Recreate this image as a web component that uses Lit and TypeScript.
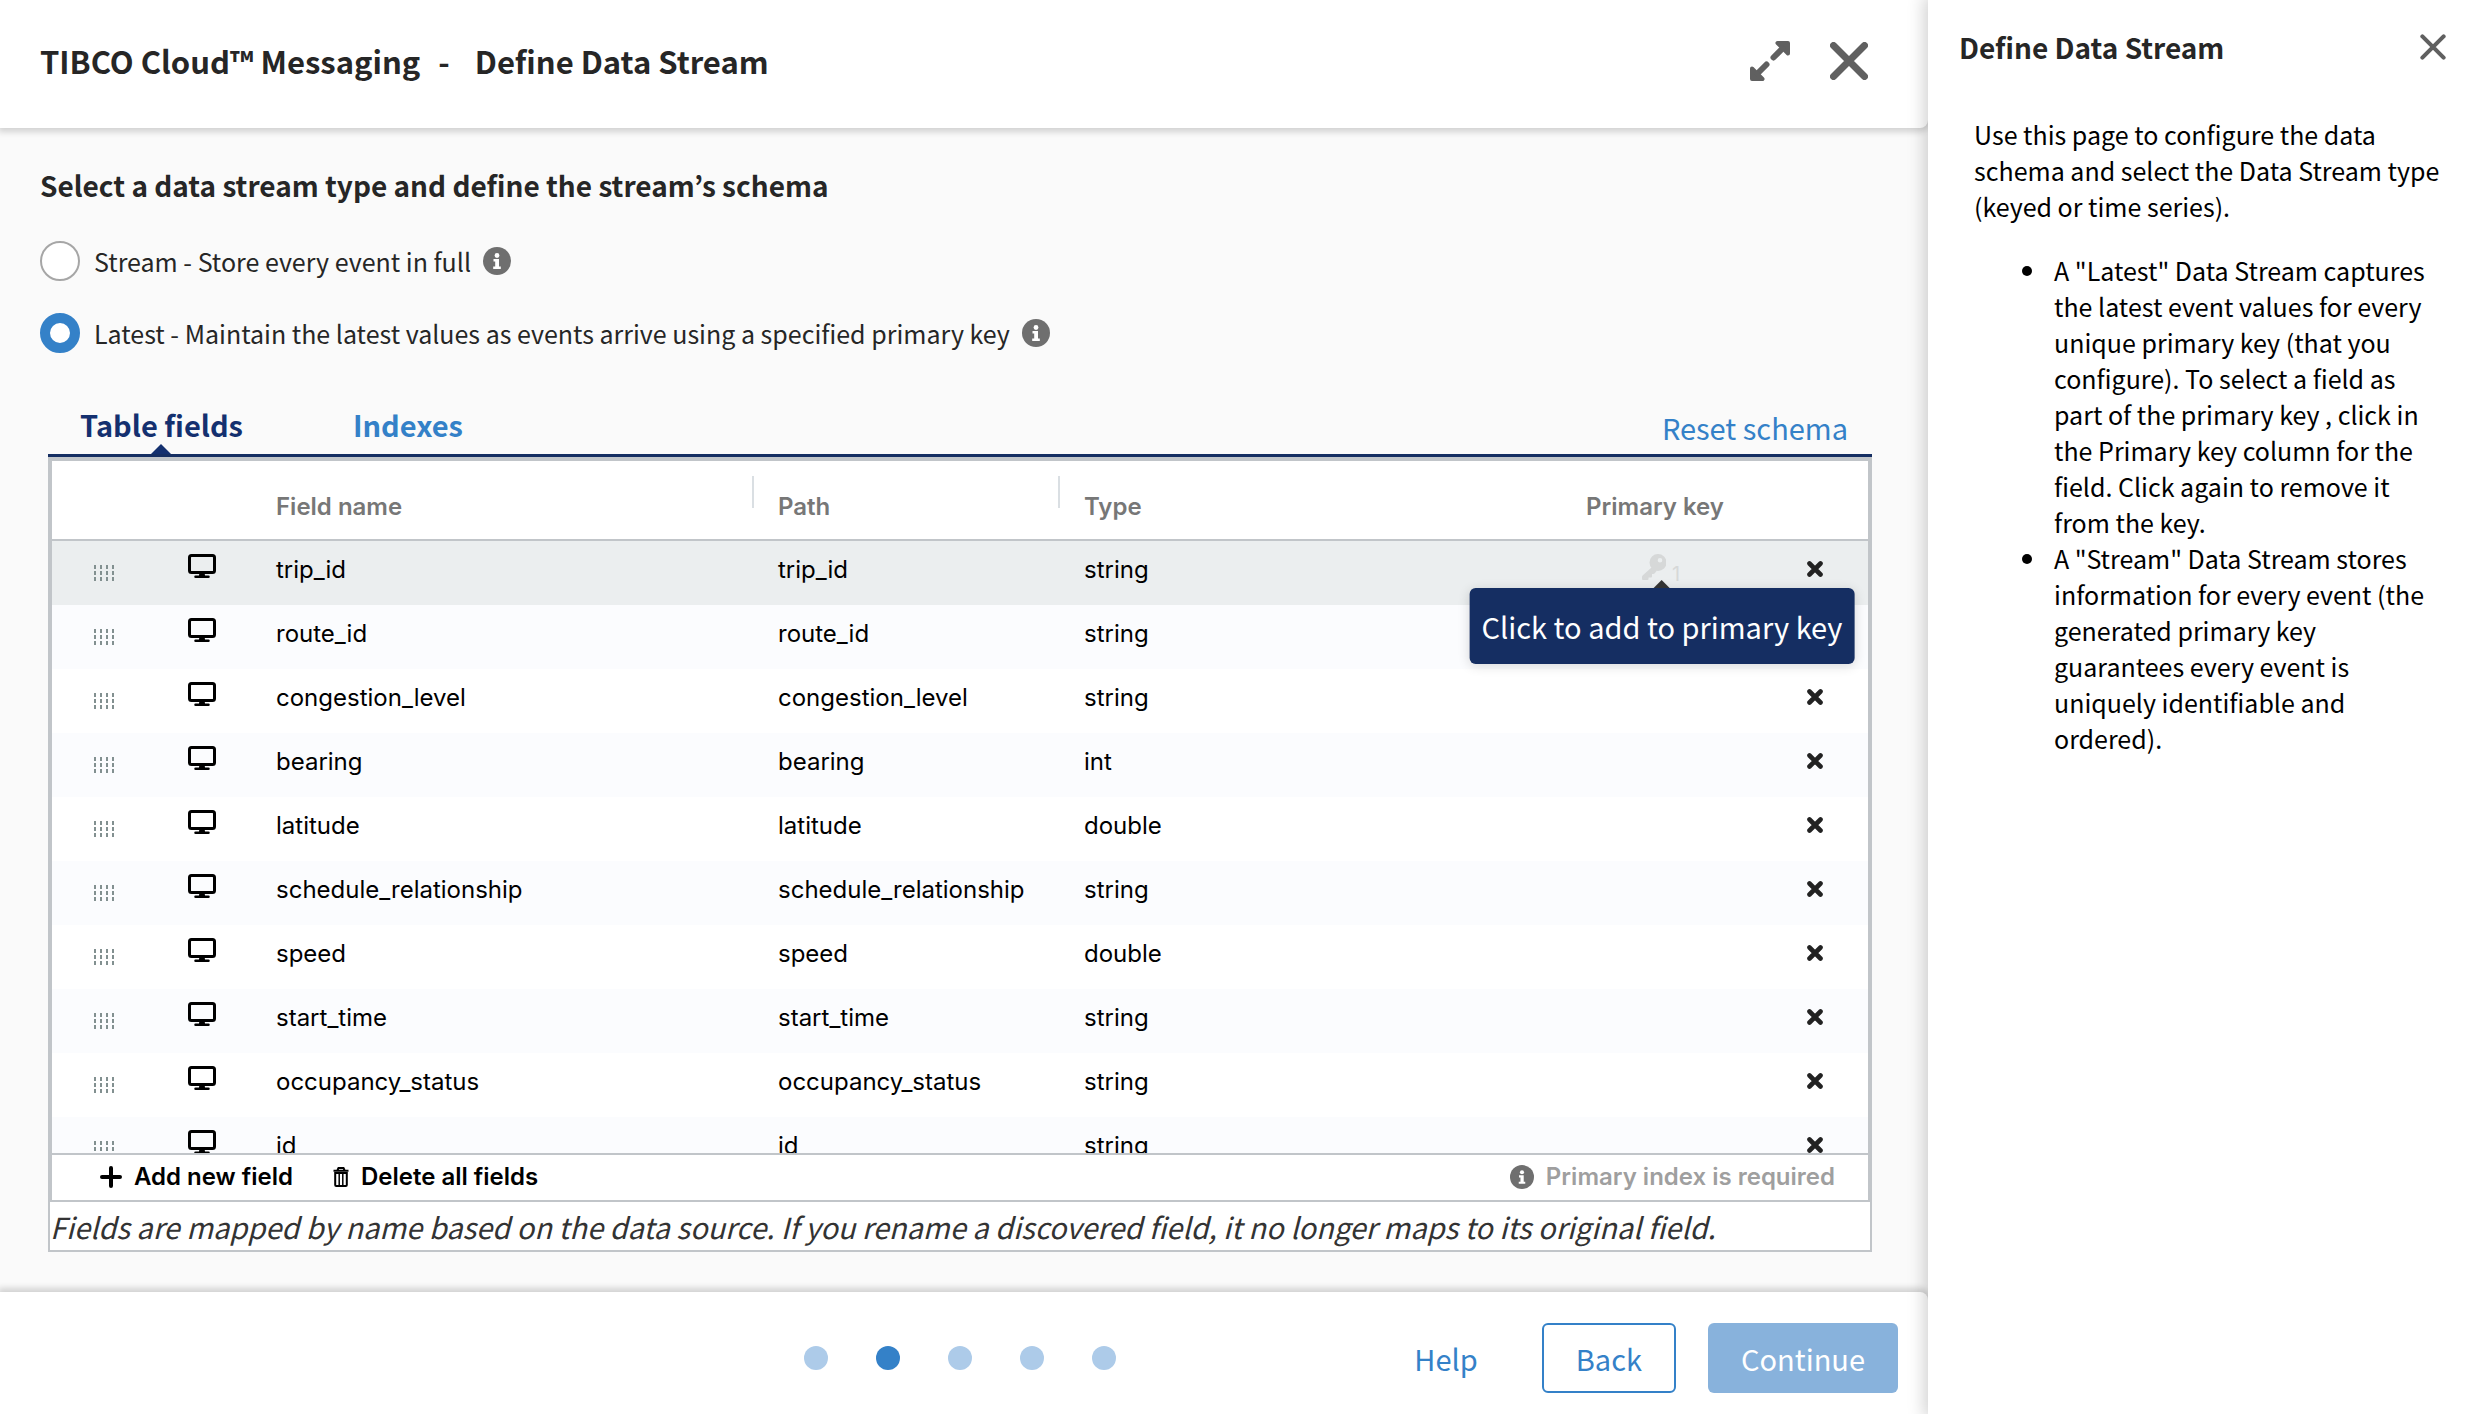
import { LitElement, html, css, svg } from "lit";
import { customElement, state } from "lit/decorators.js";

interface Field {
  name: string;
  path: string;
  type: string;
}

const row = (name: string, type: string): Field => ({ name, path: name, type });

const FIELDS: Field[] = [
  row("trip_id", "string"),
  row("route_id", "string"),
  row("congestion_level", "string"),
  row("bearing", "int"),
  row("latitude", "double"),
  row("schedule_relationship", "string"),
  row("speed", "double"),
  row("start_time", "string"),
  row("occupancy_status", "string"),
  row("id", "string"),
];

const icon = (size: number[], body: unknown) => html`
  <svg class="icon" width=${size[0]} height=${size[1]} viewBox="0 0 ${size[0]} ${size[1]}" aria-hidden="true">${body}</svg>`;

const infoIcon = (size: number) => html`
  <svg class="icon info" width=${size} height=${size} viewBox="0 0 28 28" aria-hidden="true">
    <circle cx="14" cy="14" r="14" fill="#6f6f6f"></circle>
    <circle cx="14" cy="8.5" r="2.4" fill="#fff"></circle>
    <path d="M10.5 12h5.5v7.5h1.8V22h-7.6v-2.5h2v-5h-1.7z" fill="#fff"></path>
  </svg>`;

const monitorIcon = icon([28, 24], svg`
  <rect x="1.5" y="1.5" width="25" height="17" rx="2" fill="none" stroke="#000" stroke-width="3"></rect>
  <path d="M11.5 18.5h5l.5 3h3.5a1.25 1.25 0 0 1 0 2.5h-13a1.25 1.25 0 0 1 0-2.5H11z" fill="#000"></path>`);

const removeIcon = icon([16, 16], svg`
  <path d="M2.5 2.5 13.5 13.5M13.5 2.5 2.5 13.5" stroke="#222" stroke-width="4.6" stroke-linecap="round"></path>`);

const gripIcon = icon([20, 16], [0, 6, 12, 18].map((x) => [0, 6, 12].map((y) => svg`
  <rect x=${x} y=${y} width="2" height="4" fill="#829090"></rect>`)));

const keyIcon = icon([24, 26], svg`
  <path d="M9.500 13.500 0.600 21.400Q0 22 0 23v2q0 1 1 1h4.500q1 0 1-1v-1.500H9q1 0 1-1V20h1.500q.6 0 1-.4l2.500-3z" fill="#d6d8d8"></path>
  <path fill-rule="evenodd" d="M16 0a8.500 8.500 0 1 0 0 17 8.500 8.500 0 0 0 0-17zm2 4a2.300 2.300 0 1 1 0 4.600 2.300 2.300 0 0 1 0-4.600z" fill="#d6d8d8"></path>`);

const plusIcon = icon([22, 22], svg`
  <path d="M11 2v18M2 11h18" stroke="#000" stroke-width="4" stroke-linecap="round"></path>`);

const trashIcon = icon([16, 20], svg`
  <path d="M0.5 3.8h15M4.500 3 5.500 1h5l1 2" stroke="#000" stroke-width="2" fill="none"></path>
  <path d="M2.200 6h11.600v12a1 1 0 0 1-1 1H3.200a1 1 0 0 1-1-1z" fill="none" stroke="#000" stroke-width="2"></path>
  <path d="M6.200 7v11M9.800 7v11" stroke="#000" stroke-width="1.500"></path>`);

const expandIcon = icon([40, 40], svg`
  <path d="M23.5 16.5 34 6M16.5 23.5 6 34" stroke="#606060" stroke-width="6" stroke-linecap="round"></path>
  <path d="M27.5 2H38v10.5zM12.5 38H2V27.5z" fill="#606060" stroke="#606060" stroke-width="4" stroke-linejoin="round"></path>`);

const closeIcon = (size: number, weight: number) => html`
  <svg class="icon" width=${size} height=${size} viewBox="0 0 38 38" aria-hidden="true">
    <path d="M3.5 3.5 34.5 34.5M34.5 3.5 3.5 34.5" stroke="#606060" stroke-width=${weight} stroke-linecap="round"></path>
  </svg>`;

@customElement("app-root")
export class AppRoot extends LitElement {
  @state() private mode = "latest";

  static styles = css`
    :host {
      display: block;
      --blue: #3481c8;
      --navy: #152e62;
      --rule: #c1c5c9;
      --sans: "Noto Sans CJK KR", "Noto Sans", sans-serif;
      font-family: var(--sans);
      color: #262626;
    }
    * { box-sizing: border-box; }
    button {
      font: inherit;
      color: inherit;
      background: none;
      border: 0;
      margin: 0;
      padding: 0;
      cursor: pointer;
    }
    h1, h2, p, ul { margin: 0; }
    .icon { display: block; flex: none; }
    .page { display: flex; min-height: 100vh; background: #fafafa; }
    .wizard {
      flex: 1;
      min-width: 0;
      display: flex;
      flex-direction: column;
    }
    .top {
      display: flex;
      align-items: center;
      justify-content: space-between;
      height: 128px;
      padding: 0 60px 6px 40px;
      background: #fff;
      border-bottom-right-radius: 8px;
      box-shadow: 0 2px 6px 2px rgba(0, 0, 0, 0.16);
    }
    .title { display: flex; gap: 18px; font-size: 31px; line-height: 48px; font-weight: 700; white-space: pre; }
    .tools { display: flex; align-items: center; gap: 40px; }
    .tools button { display: block; }
    .content { flex: 1; padding: 35px 56px 40px 40px; }
    .lead { font-size: 28px; line-height: 44px; font-weight: 700; }
    .choices { display: grid; gap: 32px; padding-top: 34px; }
    .choice { display: flex; align-items: center; gap: 14px; height: 40px; font-size: 25px; line-height: 38px; }
    .choice .info { margin-left: -2px; }
    .choice input {
      appearance: none;
      width: 40px;
      height: 40px;
      margin: 0;
      border: 2px solid #a6a6a6;
      border-radius: 50%;
      background: #fff;
    }
    .choice input:checked { border: 10px solid var(--blue); }
    .editor { margin: 40px 0 0 8px; }
    .tabs {
      display: flex;
      align-items: flex-end;
      height: 64px;
      padding: 0 24px 0 32px;
      border-bottom: 3px solid var(--navy);
      font-size: 29px;
      line-height: 44px;
    }
    .tab { position: relative; height: 52px; padding-bottom: 8px; font-weight: 700; color: var(--blue); margin-right: 110px; }
    .tab.current { color: #14306f; }
    .tab.current::after {
      content: "";
      position: absolute;
      left: calc(50% - 10px);
      bottom: 0;
      border: 10px solid transparent;
      border-top: 0;
      border-bottom-color: #14306f;
    }
    .reset { margin-left: auto; height: 54px; color: var(--blue); }
    .frame { border: 2px solid var(--rule); background: #fff; }
    .grid-box { border: 2px solid var(--rule); font-family: Inter, "Liberation Sans", sans-serif; font-size: 24px; line-height: 28px; }
    .scroller { height: 692px; overflow: hidden; }
    table { width: 100%; border-collapse: collapse; table-layout: fixed; color: #000; }
    th, td { padding: 0; text-align: left; font-weight: 400; vertical-align: top; }
    thead tr { height: 80px; box-shadow: inset 0 -2px var(--rule); }
    th { color: #777; font-weight: 600; padding: 32px 0 0 26px; }
    th.split { background: linear-gradient(#dadfe3, #dadfe3) 0 15px / 2px 32px no-repeat; }
    th.name, td.name { padding-left: 20px; }
    tbody tr { height: 64px; background: #fff; }
    tbody tr:nth-child(even) { background: #fbfcfe; }
    tbody tr.hover { background: #ebeeef; }
    td { padding: 15px 0 0 26px; }
    td.grip { padding: 24px 0 0 42px; }
    td.kind { padding: 13px 0 0 16px; }
    .c-grip { width: 120px; }
    .c-kind { width: 84px; }
    .c-path { width: 306px; }
    .c-type { width: 502px; }
    .c-key { width: 226px; }
    .c-del { width: 82px; }
    td.key { padding: 13px 0 0 82px; }
    td.del { padding: 20px 0 0 21px; }
    td.del button { display: block; }
    .key-wrap { position: relative; display: flex; width: 40px; gap: 6px; font-size: 20px; color: #d6d8d8; }
    .order { padding-top: 6px; line-height: 28px; }
    .tip {
      position: absolute;
      z-index: 2;
      top: 34px;
      left: 50%;
      transform: translateX(-50%);
      height: 76px;
      padding: 0 12px;
      border-radius: 6px;
      background: var(--navy);
      color: #fff;
      font: 29px/76px var(--sans);
      white-space: nowrap;
      box-shadow: 0 2px 12px rgba(0, 0, 0, 0.14);
    }
    .tip::before {
      content: "";
      position: absolute;
      left: calc(50% - 8px);
      top: -8px;
      border: 8px solid transparent;
      border-top: 0;
      border-bottom-color: #333;
    }
    .actions {
      display: flex;
      align-items: center;
      gap: 40px;
      height: 47px;
      padding: 0 33px 2px 48px;
      border-top: 2px solid var(--rule);
      font-weight: 600;
      color: #000;
    }
    .actions button, .required { display: flex; align-items: center; gap: 12px; }
    .required { margin-left: auto; color: #9f9f9f; }
    .note { height: 48px; font-size: 29px; line-height: 48px; font-style: italic; color: #333; }
    .bottom {
      display: grid;
      grid-template-columns: 1fr auto 1fr;
      align-items: center;
      height: 122px;
      padding: 10px 30px 0 22px;
      background: #fff;
      border-top-right-radius: 8px;
      box-shadow: 0 -2px 6px 2px rgba(0, 0, 0, 0.16);
      font-size: 29px;
    }
    .dots { grid-column: 2; display: flex; gap: 48px; }
    .dot { width: 24px; height: 24px; border-radius: 50%; background: #adcbe9; }
    .dot.on { background: var(--blue); }
    .nav { display: flex; justify-content: flex-end; align-items: center; gap: 32px; }
    .help { margin-right: 32px; color: var(--blue); text-decoration: none; }
    .nav button { height: 70px; border-radius: 6px; padding: 0 33px; }
    .nav .back { border: 2px solid var(--blue); padding: 0 32px; color: var(--blue); background: #fff; }
    .nav .next { background: #88b2dc; color: #fff; }
    .side {
      width: 556px;
      background: #fff;
      padding: 23px 38px 0 31px;
      color: #000;
      font-size: 25px;
      line-height: 36px;
      box-shadow: 0 0 16px 4px rgba(0, 0, 0, 0.18);
      z-index: 1;
    }
    .side-head { display: flex; align-items: center; justify-content: space-between; color: #262626; height: 48px; }
    .side-head h2 { font-size: 28px; line-height: 48px; font-weight: 700; }
    .side p { padding: 45px 0 0 15px; }
    .side ul { padding: 28px 0 0 63px; list-style: none; }
    .side li { display: flex; gap: 22px; }
    .side li::before {
      content: "";
      flex: none;
      width: 10px;
      height: 10px;
      margin-top: 14px;
      border-radius: 50%;
      background: #000;
    }
  `;

  private choice(value: string, label: string) {
    return html`
      <label class="choice">
        <input type="radio" name="mode" .checked=${this.mode === value} @change=${() => (this.mode = value)} />
        <span>${label}</span>
        ${infoIcon(28)}
      </label>`;
  }

  private fieldRow(field: Field, index: number) {
    const first = index === 0;
    return html`
      <tr class=${first ? "hover" : ""}>
        <td class="grip">${gripIcon}</td>
        <td class="kind">${monitorIcon}</td>
        <td class="name">${field.name}</td>
        <td>${field.path}</td>
        <td>${field.type}</td>
        <td class="key">
          ${first
            ? html`<div class="key-wrap">${keyIcon}<span class="order">1</span><span class="tip" role="tooltip">Click to add to primary key</span></div>`
            : ""}
        </td>
        <td class="del"><button aria-label="Remove ${field.name}">${removeIcon}</button></td>
      </tr>`;
  }

  render() {
    return html`
      <div class="page">
        <main class="wizard">
          <header class="top">
            <h1 class="title"><span>TIBCO Cloud™ Messaging</span><span>-</span><span> Define Data Stream</span></h1>
            <div class="tools">
              <button aria-label="Expand">${expandIcon}</button>
              <button aria-label="Close">${closeIcon(38, 7)}</button>
            </div>
          </header>
          <section class="content">
            <h2 class="lead">Select a data stream type and define the stream’s schema</h2>
            <div class="choices">
              ${this.choice("stream", "Stream - Store every event in full")}
              ${this.choice("latest", "Latest - Maintain the latest values as events arrive using a specified primary key")}
            </div>
            <div class="editor">
              <div class="tabs">
                <button class="tab current">Table fields</button>
                <button class="tab">Indexes</button>
                <button class="reset">Reset schema</button>
              </div>
              <div class="frame">
                <div class="grid-box">
                  <div class="scroller">
                    <table>
                      <colgroup>
                        <col class="c-grip" /><col class="c-kind" /><col /><col class="c-path" />
                        <col class="c-type" /><col class="c-key" /><col class="c-del" />
                      </colgroup>
                      <thead>
                        <tr>
                          <th></th><th></th>
                          <th class="name">Field name</th>
                          <th class="split">Path</th>
                          <th class="split">Type</th>
                          <th>Primary key</th>
                          <th></th>
                        </tr>
                      </thead>
                      <tbody>${FIELDS.map((f, i) => this.fieldRow(f, i))}</tbody>
                    </table>
                  </div>
                  <div class="actions">
                    <button>${plusIcon}Add new field</button>
                    <button>${trashIcon}Delete all fields</button>
                    <span class="required">${infoIcon(24)}Primary index is required</span>
                  </div>
                </div>
                <p class="note">Fields are mapped by name based on the data source. If you rename a discovered field, it no longer maps to its original field.</p>
              </div>
            </div>
          </section>
          <footer class="bottom">
            <div class="dots">${[0, 1, 2, 3, 4].map((i) => html`<span class="dot ${i === 1 ? "on" : ""}"></span>`)}</div>
            <div class="nav">
              <a class="help" href="#help">Help</a>
              <button class="back">Back</button>
              <button class="next">Continue</button>
            </div>
          </footer>
        </main>
        <aside class="side">
          <div class="side-head">
            <h2>Define Data Stream</h2>
            <button aria-label="Close help">${closeIcon(26, 6)}</button>
          </div>
          <p>Use this page to configure the data schema and select the Data Stream type (keyed or time series).</p>
          <ul>
            <li>A "Latest" Data Stream captures the latest event values for every unique primary key (that you configure). To select a field as part of the primary key , click in the Primary key column for the field. Click again to remove it from the key.</li>
            <li>A "Stream" Data Stream stores information for every event (the generated primary key guarantees every event is uniquely identifiable and ordered).</li>
          </ul>
        </aside>
      </div>`;
  }
}
